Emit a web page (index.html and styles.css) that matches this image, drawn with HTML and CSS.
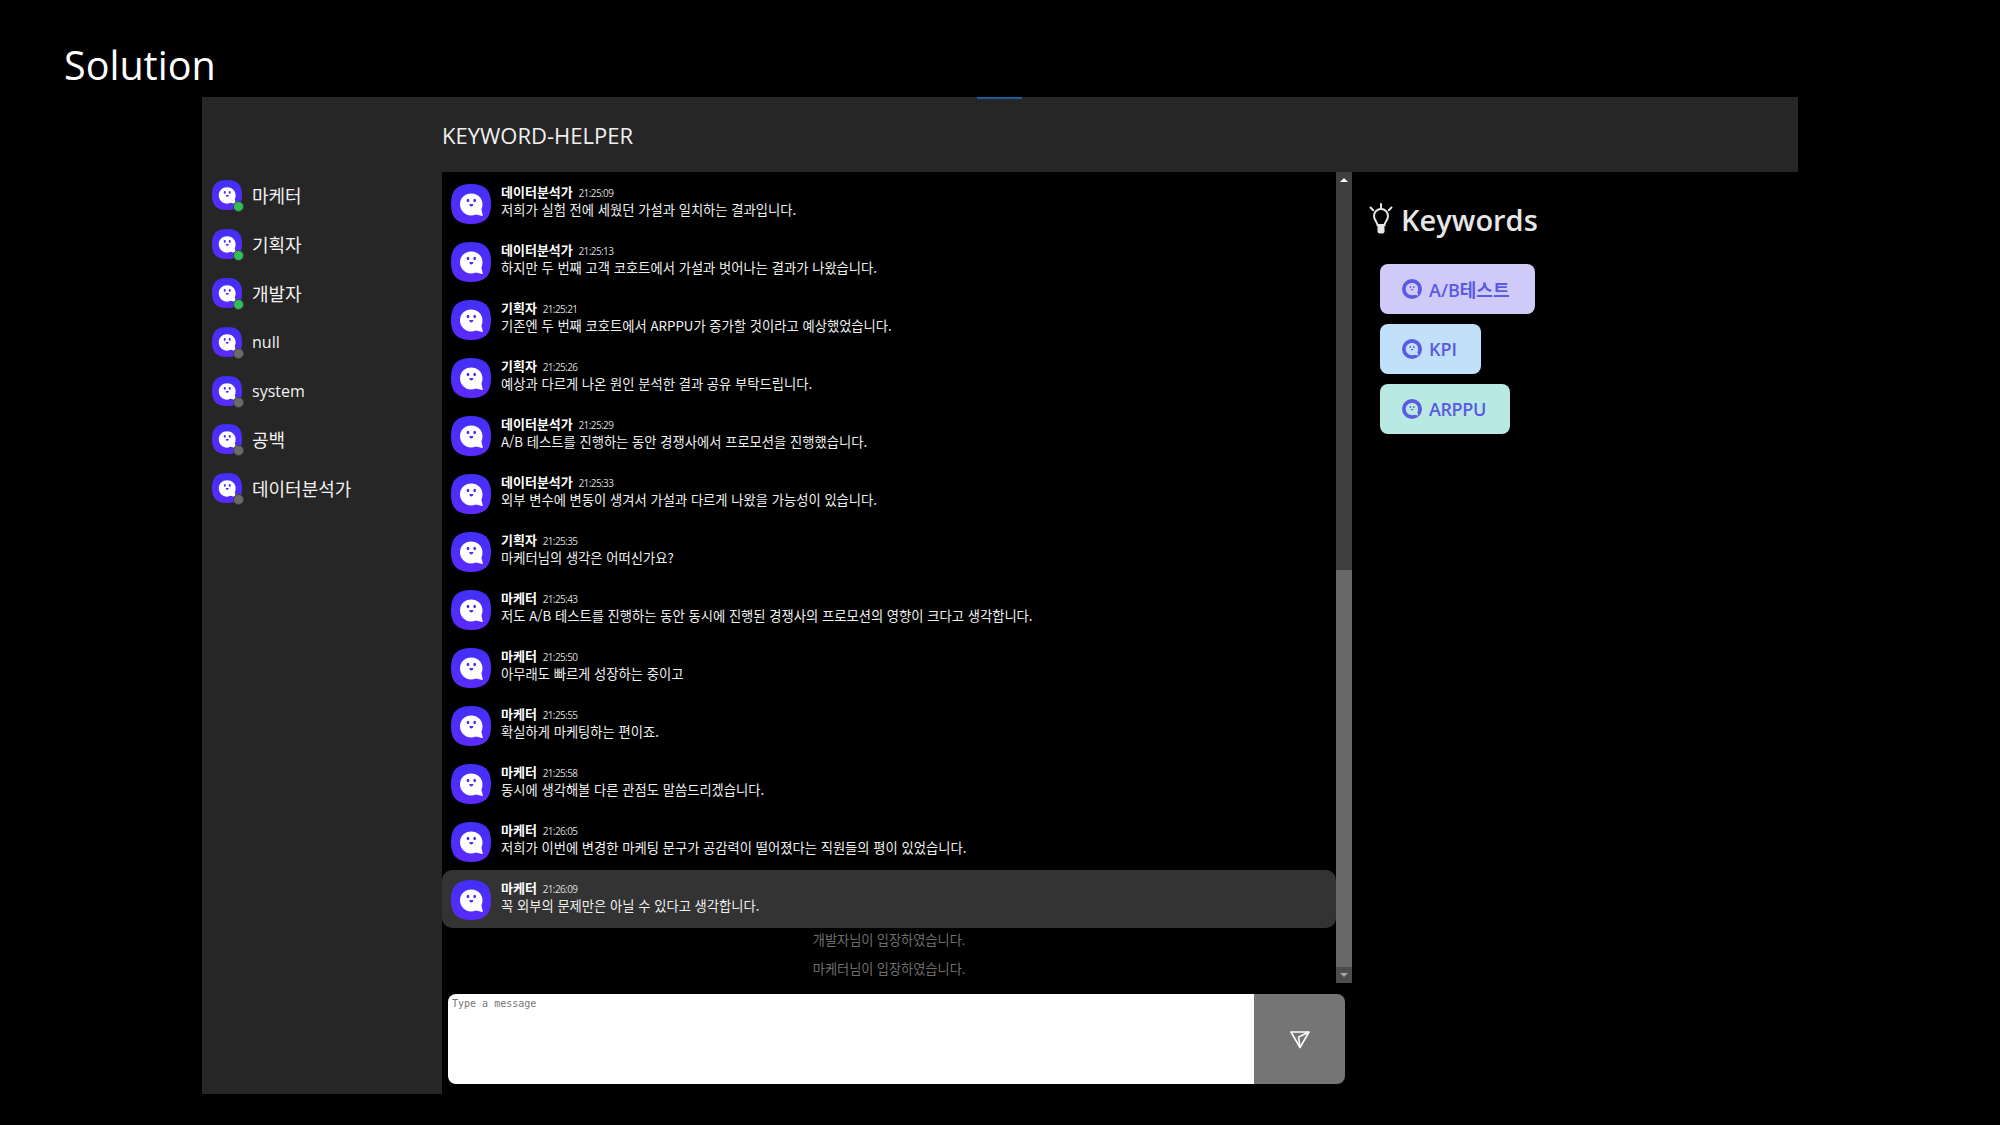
FILE: index.html
```html
<!DOCTYPE html>
<html lang="ko">
<head>
  <meta charset="UTF-8">
  <title>Solution</title>
  <link rel="stylesheet" href="styles.css">
</head>
<body>
  <svg class="defs" width="0" height="0">
    <defs>
      <linearGradient id="botFill" x1="0" y1="0" x2="0" y2="1">
        <stop offset="0" stop-color="#4130f6"/>
        <stop offset="1" stop-color="#5c2aff"/>
      </linearGradient>
      <symbol id="bot" viewBox="0 0 40 40">
        <path fill="url(#botFill)" d="M20 0c14 0 20 6 20 20s-6 20-20 20S0 34 0 20 6 0 20 0z"/>
        <path fill="#fff" d="M20.2 9.500C14 9.500 9 14 9 20.200S14 31.500 20.200 31.500c1.700 0 3.300-.4 4.700-1.100l6.300 1.500c.5.1.8-.3.6-.7l-1.400-5.400c.7-1.500 1.100-3.600 1.100-5.600C31.500 14 26.400 9.500 20.200 9.500z"/>
        <ellipse fill="#4a2cf8" cx="17" cy="16.500" rx="1.300" ry="1.800"/>
        <ellipse fill="#4a2cf8" cx="23.700" cy="16.500" rx="1.300" ry="1.800"/>
        <path fill="#4a2cf8" d="M18.300 20h4c0 1.400-.9 2.400-2 2.400s-2-1-2-2.400z"/>
      </symbol>
      <symbol id="botChip" viewBox="0 0 40 40">
        <circle fill="#5a5ae2" cx="20" cy="20" r="20"/>
        <path class="chip-ghost" d="M20.200 8C13 8 7.500 13 7.500 20.200S13 32.500 20.200 32.500c1.700 0 3.300-.4 4.700-1.100l7 1.800c.5.1.8-.3.6-.7l-1.600-6c.8-1.700 1.300-4 1.300-6.300C32.500 13 27.400 8 20.200 8z"/>
        <ellipse fill="#5a5ae2" cx="16.800" cy="16" rx="1.600" ry="2.100"/>
        <ellipse fill="#5a5ae2" cx="23.800" cy="16" rx="1.600" ry="2.100"/>
        <path fill="#5a5ae2" d="M18 20h4.600c0 1.500-1 2.600-2.300 2.600S18 21.500 18 20z"/>
      </symbol>
    </defs>
  </svg>

  <h1 class="page-title">Solution</h1>

  <div class="app">
    <div class="loading-bar"></div>

    <header class="room-header">KEYWORD-HELPER</header>

    <aside class="members">
      <div class="member">
        <span class="member-avatar"><svg><use href="#bot"/></svg><i class="status online"></i></span>
        <span class="member-name">마케터</span>
      </div>
      <div class="member">
        <span class="member-avatar"><svg><use href="#bot"/></svg><i class="status online"></i></span>
        <span class="member-name">기획자</span>
      </div>
      <div class="member">
        <span class="member-avatar"><svg><use href="#bot"/></svg><i class="status online"></i></span>
        <span class="member-name">개발자</span>
      </div>
      <div class="member">
        <span class="member-avatar"><svg><use href="#bot"/></svg><i class="status"></i></span>
        <span class="member-name latin">null</span>
      </div>
      <div class="member">
        <span class="member-avatar"><svg><use href="#bot"/></svg><i class="status"></i></span>
        <span class="member-name latin">system</span>
      </div>
      <div class="member">
        <span class="member-avatar"><svg><use href="#bot"/></svg><i class="status"></i></span>
        <span class="member-name">공백</span>
      </div>
      <div class="member">
        <span class="member-avatar"><svg><use href="#bot"/></svg><i class="status"></i></span>
        <span class="member-name">데이터분석가</span>
      </div>
    </aside>

    <main class="chat">
      <div class="chat-scroll">
        <div class="messages">
          <div class="message">
            <svg class="avatar"><use href="#bot"/></svg>
            <div class="message-body"><b class="author">데이터분석가</b> <span class="time">21:25:09</span><p>저희가 실험 전에 세웠던 가설과 일치하는 결과입니다.</p></div>
          </div>
          <div class="message">
            <svg class="avatar"><use href="#bot"/></svg>
            <div class="message-body"><b class="author">데이터분석가</b> <span class="time">21:25:13</span><p>하지만 두 번째 고객 코호트에서 가설과 벗어나는 결과가 나왔습니다.</p></div>
          </div>
          <div class="message">
            <svg class="avatar"><use href="#bot"/></svg>
            <div class="message-body"><b class="author">기획자</b> <span class="time">21:25:21</span><p>기존엔 두 번째 코호트에서 ARPPU가 증가할 것이라고 예상했었습니다.</p></div>
          </div>
          <div class="message">
            <svg class="avatar"><use href="#bot"/></svg>
            <div class="message-body"><b class="author">기획자</b> <span class="time">21:25:26</span><p>예상과 다르게 나온 원인 분석한 결과 공유 부탁드립니다.</p></div>
          </div>
          <div class="message">
            <svg class="avatar"><use href="#bot"/></svg>
            <div class="message-body"><b class="author">데이터분석가</b> <span class="time">21:25:29</span><p>A/B 테스트를 진행하는 동안 경쟁사에서 프로모션을 진행했습니다.</p></div>
          </div>
          <div class="message">
            <svg class="avatar"><use href="#bot"/></svg>
            <div class="message-body"><b class="author">데이터분석가</b> <span class="time">21:25:33</span><p>외부 변수에 변동이 생겨서 가설과 다르게 나왔을 가능성이 있습니다.</p></div>
          </div>
          <div class="message">
            <svg class="avatar"><use href="#bot"/></svg>
            <div class="message-body"><b class="author">기획자</b> <span class="time">21:25:35</span><p>마케터님의 생각은 어떠신가요?</p></div>
          </div>
          <div class="message">
            <svg class="avatar"><use href="#bot"/></svg>
            <div class="message-body"><b class="author">마케터</b> <span class="time">21:25:43</span><p>저도 A/B 테스트를 진행하는 동안 동시에 진행된 경쟁사의 프로모션의 영향이 크다고 생각합니다.</p></div>
          </div>
          <div class="message">
            <svg class="avatar"><use href="#bot"/></svg>
            <div class="message-body"><b class="author">마케터</b> <span class="time">21:25:50</span><p>아무래도 빠르게 성장하는 중이고</p></div>
          </div>
          <div class="message">
            <svg class="avatar"><use href="#bot"/></svg>
            <div class="message-body"><b class="author">마케터</b> <span class="time">21:25:55</span><p>확실하게 마케팅하는 편이죠.</p></div>
          </div>
          <div class="message">
            <svg class="avatar"><use href="#bot"/></svg>
            <div class="message-body"><b class="author">마케터</b> <span class="time">21:25:58</span><p>동시에 생각해볼 다른 관점도 말씀드리겠습니다.</p></div>
          </div>
          <div class="message">
            <svg class="avatar"><use href="#bot"/></svg>
            <div class="message-body"><b class="author">마케터</b> <span class="time">21:26:05</span><p>저희가 이번에 변경한 마케팅 문구가 공감력이 떨어졌다는 직원들의 평이 있었습니다.</p></div>
          </div>
          <div class="message active">
            <svg class="avatar"><use href="#bot"/></svg>
            <div class="message-body"><b class="author">마케터</b> <span class="time">21:26:09</span><p>꼭 외부의 문제만은 아닐 수 있다고 생각합니다.</p></div>
          </div>
          <div class="notice">개발자님이 입장하였습니다.</div>
          <div class="notice">마케터님이 입장하였습니다.</div>
        </div>

        <div class="scrollbar">
          <div class="scroll-track"><span class="arrow-up"></span></div>
          <div class="scroll-thumb"></div>
          <div class="scroll-end"><span class="arrow-down"></span></div>
        </div>
      </div>

      <form class="composer">
        <textarea class="composer-input" placeholder="Type a message"></textarea>
        <button class="send" type="button">
          <svg width="20" height="19" viewBox="0 0 20 19" fill="none" stroke="#fff" stroke-width="1.6" stroke-linejoin="round">
            <path d="M1 2h18L10 17.500z"/>
            <path d="M10 17.500 8.600 7 19 2"/>
          </svg>
        </button>
      </form>
    </main>

    <section class="keywords">
      <h2 class="keywords-title">
        <svg width="26" height="32" viewBox="0 0 26 32" fill="none" stroke="#e6e6e6" stroke-width="2" stroke-linecap="round">
          <path d="M13 1v3.500M2.500 4.500l2.700 2.800M23.500 4.500l-2.700 2.800"/>
          <path d="M9.500 22c0-3-3.500-4.500-3.500-9a7 7 0 0 1 14 0c0 4.500-3.500 6-3.500 9z"/>
          <path d="M9.500 23h7v5.500a2 2 0 0 1-2 2h-3a2 2 0 0 1-2-2z" fill="#e6e6e6" stroke="none"/>
        </svg>
        Keywords
      </h2>
      <div class="chips">
        <div class="chip chip-purple"><svg class="chip-icon"><use href="#botChip"/></svg>A/B테스트</div>
        <div class="chip chip-blue"><svg class="chip-icon"><use href="#botChip"/></svg>KPI</div>
        <div class="chip chip-green"><svg class="chip-icon"><use href="#botChip"/></svg>ARPPU</div>
      </div>
    </section>
  </div>
</body>
</html>
```

FILE: styles.css
```css
* {
  box-sizing: border-box;
}

body {
  margin: 0;
  height: 1125px;
  overflow: hidden;
  background: #000;
  color: #fff;
  font-family: "Open Sans", "Noto Sans CJK KR", sans-serif;
}

.defs {
  display: block;
  height: 0;
}

.page-title {
  margin: 0;
  height: 97px;
  padding: 40px 0 0 64px;
  font-size: 39.500px;
  line-height: 50px;
  font-weight: 400;
}

.app {
  position: relative;
  width: 1596px;
  height: 997px;
  margin: 0 auto;
  display: grid;
  grid-template-columns: 240px 910px 446px;
  grid-template-rows: 75px 922px;
}

.loading-bar {
  position: absolute;
  top: 0;
  left: 775px;
  width: 45px;
  height: 2px;
  background: #1d5c9a;
}

.room-header {
  grid-column: 1 / 4;
  background: #262626;
  padding: 1px 0 0 240px;
  font-size: 22px;
  line-height: 74px;
  color: #f0f0f0;
}

.members {
  background: #262626;
  margin-top: -1px;
}

.member {
  display: flex;
  align-items: center;
  height: 48.800px;
  padding-left: 10px;
}

.member-avatar {
  position: relative;
  width: 30px;
  height: 30px;
  margin-right: 10px;
}

.member-avatar svg {
  display: block;
  width: 30px;
  height: 30px;
}

.status {
  position: absolute;
  right: -2px;
  bottom: -2px;
  width: 11px;
  height: 11px;
  border-radius: 50%;
  background: #6a6a6a;
  border: 1.500px solid #3f3f3f;
}

.status.online {
  background: #2fbf55;
}

.member-name {
  font-size: 18px;
  color: #f2f2f2;
}

.member-name.latin {
  font-size: 16px;
}

.chat {
  display: flex;
  flex-direction: column;
}

.chat-scroll {
  display: flex;
  height: 811px;
}

.messages {
  flex: 1;
  padding-top: 2px;
}

.message {
  display: flex;
  height: 58px;
  padding: 10px 9px 0;
  gap: 10px;
  font-family: "Noto Sans CJK KR", sans-serif;
  font-size: 13.300px;
}

.message.active {
  background: #333;
  border-radius: 10px;
}

.message-body {
  margin-top: -2px;
}

.avatar {
  flex: none;
  width: 40px;
  height: 40px;
}

.author {
  font-size: 13px;
  line-height: 18px;
}

.time {
  margin-left: 2px;
  font-family: "Open Sans", sans-serif;
  font-size: 10px;
  letter-spacing: -0.6px;
  color: #ddd;
}

.message p {
  margin: 0;
  line-height: 18.500px;
  color: #f0f0f0;
}

.notice {
  height: 29px;
  line-height: 24px;
  text-align: center;
  font-size: 13.200px;
  color: #6f6f6f;
}

.scrollbar {
  flex: none;
  width: 16px;
  display: flex;
  flex-direction: column;
}

.scroll-track {
  height: 398px;
  background: #3f3f3f;
  padding-top: 6px;
}

.scroll-thumb {
  flex: 1;
  background: #686868;
}

.scroll-end {
  height: 16px;
  background: #4d4d4d;
  padding-top: 6px;
}

.arrow-up,
.arrow-down {
  display: block;
  width: 0;
  margin: 0 auto;
  border-left: 4px solid transparent;
  border-right: 4px solid transparent;
}

.arrow-up {
  border-bottom: 4px solid #fff;
}

.arrow-down {
  border-top: 4px solid #a5a5a5;
}

.composer {
  display: flex;
  height: 90px;
  margin: 11px 7px 0 6px;
  border-radius: 8px;
  overflow: hidden;
}

.composer-input {
  flex: 1;
  border: none;
  outline: none;
  resize: none;
  padding: 4px;
  background: #fff;
  font-family: "DejaVu Sans Mono", monospace;
  font-size: 10px;
}

.send {
  width: 91px;
  border: none;
  background: #757575;
  display: flex;
  align-items: center;
  justify-content: center;
  padding: 0;
}

.keywords {
  padding: 27px 0 0 16px;
}

.keywords-title {
  display: flex;
  align-items: center;
  gap: 7px;
  margin: 0 0 25px;
  height: 40px;
  font-size: 29px;
  font-weight: 600;
  color: #e6e6e6;
}

.chips {
  display: flex;
  flex-direction: column;
  align-items: flex-start;
  gap: 10px;
  padding-left: 12px;
}

.chip {
  display: flex;
  align-items: center;
  gap: 7px;
  height: 50px;
  padding: 0 26px 0 22px;
  border-radius: 8px;
  font-size: 18px;
  font-weight: 600;
  color: #5a5ae2;
}

.chip-icon {
  width: 20px;
  height: 20px;
}

.chip-purple {
  background: #d0caf9;
  --chip: #d0caf9;
}

.chip-blue {
  background: #c1e0fa;
  --chip: #c1e0fa;
  padding-right: 24px;
}

.chip-green {
  background: #b9e9e3;
  --chip: #b9e9e3;
  padding-right: 24px;
  letter-spacing: -0.4px;
}

.chip-ghost {
  fill: var(--chip);
}
```
